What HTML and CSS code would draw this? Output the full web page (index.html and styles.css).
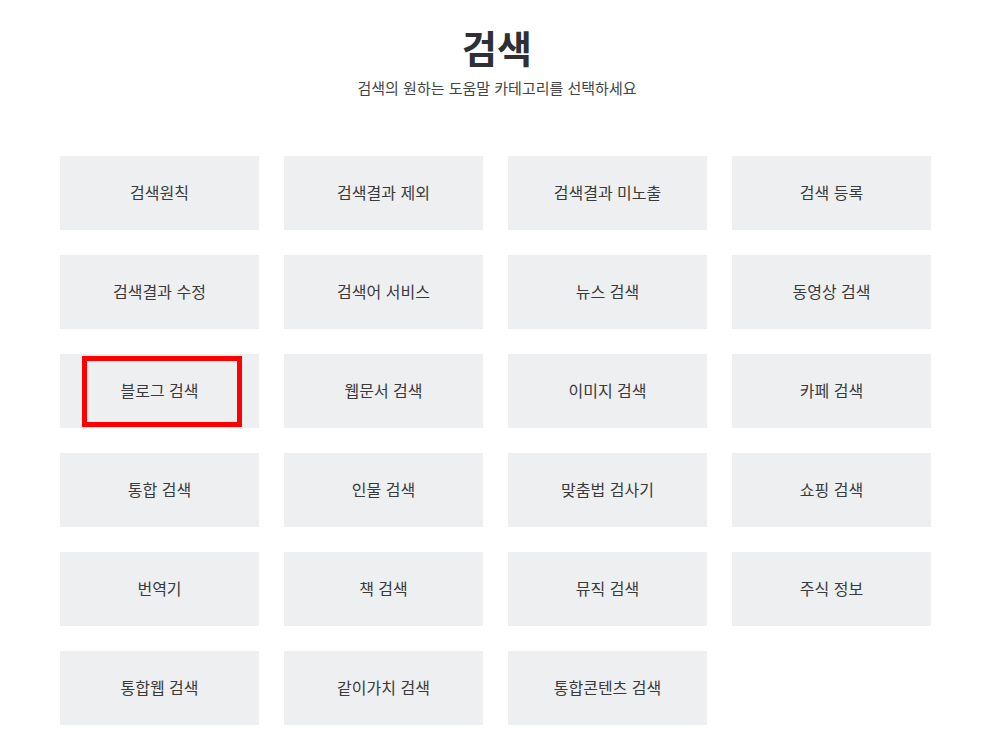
FILE: index.html
```html
<!DOCTYPE html>
<html lang="ko">
  <head>
    <meta charset="UTF-8" />
    <meta name="viewport" content="width=device-width, initial-scale=1.0" />
    <title>검색</title>
    <link rel="stylesheet" href="styles.css">
  </head>
  <body>
    <div id="header">
      <h1 id="pageTitle">검색</h1>
      <p id="subTitle">검색의 원하는 도움말 카테고리를 선택하세요</p>
    </div>

    <div id="categoryGrid">
      <a class="category" href="#">검색원칙</a>
      <a class="category" href="#">검색결과 제외</a>
      <a class="category" href="#">검색결과 미노출</a>
      <a class="category" href="#">검색 등록</a>
      <a class="category" href="#">검색결과 수정</a>
      <a class="category" href="#">검색어 서비스</a>
      <a class="category" href="#">뉴스 검색</a>
      <a class="category" href="#">동영상 검색</a>
      <a class="category highlighted" href="#">블로그 검색</a>
      <a class="category" href="#">웹문서 검색</a>
      <a class="category" href="#">이미지 검색</a>
      <a class="category" href="#">카페 검색</a>
      <a class="category" href="#">통합 검색</a>
      <a class="category" href="#">인물 검색</a>
      <a class="category" href="#">맞춤법 검사기</a>
      <a class="category" href="#">쇼핑 검색</a>
      <a class="category" href="#">번역기</a>
      <a class="category" href="#">책 검색</a>
      <a class="category" href="#">뮤직 검색</a>
      <a class="category" href="#">주식 정보</a>
      <a class="category" href="#">통합웹 검색</a>
      <a class="category" href="#">같이가치 검색</a>
      <a class="category" href="#">통합콘텐츠 검색</a>
    </div>
  </body>
</html>
```

FILE: styles.css
```css
body {
  margin: 0;
  font-family: "Noto Sans CJK KR", "Noto Sans", sans-serif;
  color: #333;
  background-color: #fff;
}
#header {
  text-align: center;
  padding-top: 18px;
}
#pageTitle {
  margin: 0;
  font-size: 38px;
  font-weight: bold;
  line-height: 58px;
  color: #2e3035;
}
#subTitle {
  margin: 0;
  font-size: 15px;
  line-height: 24px;
  color: #444;
}
#categoryGrid {
  display: grid;
  grid-template-columns: repeat(4, 199px);
  grid-auto-rows: 74px;
  gap: 25px;
  width: 871px;
  margin: 56px 0 0 60px;
}
.category {
  position: relative;
  display: flex;
  justify-content: center;
  align-items: center;
  padding-bottom: 3px;
  background-color: #eeeff1;
  font-size: 16px;
  color: #3a3a3a;
  text-decoration: none;
}
/* red marker box around one item */
.highlighted::after {
  content: "";
  position: absolute;
  left: 22px;
  top: 2px;
  width: 150px;
  height: 61px;
  border: 5px solid #ff0000;
}
```
